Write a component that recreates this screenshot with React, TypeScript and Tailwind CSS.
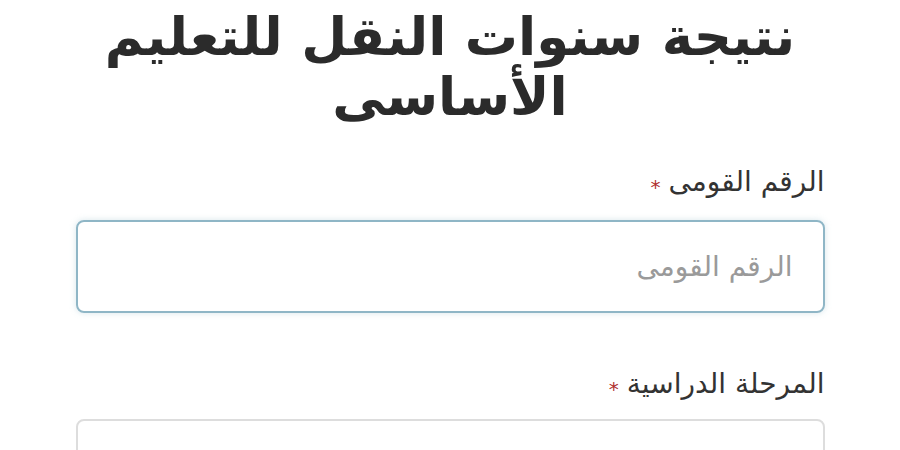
import React from 'react';

export default function App() {
    return (
        <div dir="rtl" className="w-[900px] h-[450px] overflow-hidden bg-white" style={{ fontFamily: '"DejaVu Sans", "Noto Sans", sans-serif' }}>
            <div className="mx-auto w-[749px] pt-[7px]">
                {/* Title */}
                <h1 className="text-center text-[53px] leading-[60px] font-bold text-[#2b2b2b]">
                    نتيجة سنوات النقل للتعليم
                    <br />
                    الأساسى
                </h1>

                {/* National ID */}
                <div className="mt-[37px]">
                    <label className="flex items-center gap-2 text-[28px] leading-[36px] text-[#333]">
                        الرقم القومى
                        <span className="mt-[10px] text-[20px] leading-none text-[#b03030]">*</span>
                    </label>
                    <input
                        placeholder="الرقم القومى"
                        className="mt-[20px] w-full h-[93px] rounded-[8px] border-2 border-[#8fb6c6] px-[30px] text-[28px] text-[#333] placeholder:text-[#9a9a9a] outline-none shadow-[0_0_6px_rgba(143,182,198,0.35)]"
                    />
                </div>

                {/* Stage */}
                <div className="mt-[53px]">
                    <label className="flex items-center gap-2 text-[28px] leading-[36px] text-[#333]">
                        المرحلة الدراسية
                        <span className="mt-[10px] text-[20px] leading-none text-[#b03030]">*</span>
                    </label>
                    <div className="mt-[17px] w-full h-[93px] rounded-[8px] border-2 border-[#dddddd]" />
                </div>
            </div>
        </div>
    );
}
